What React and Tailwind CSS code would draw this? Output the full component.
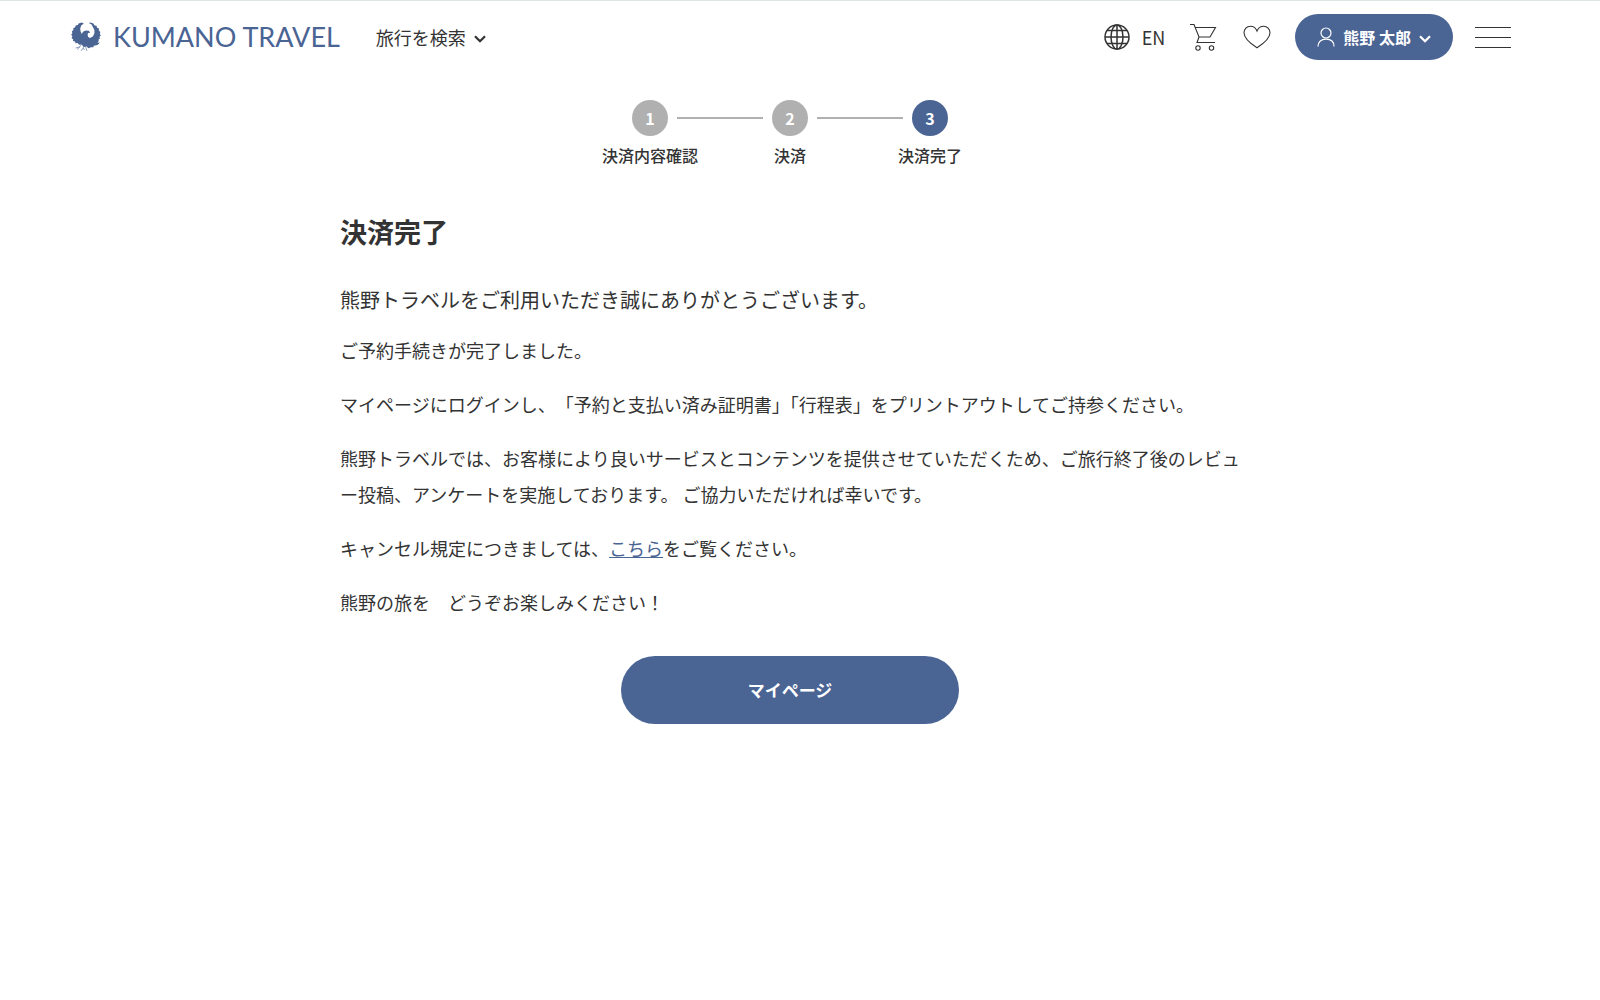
import { Fragment } from "react";

const steps = [
  { id: 1, label: "決済内容確認" },
  { id: 2, label: "決済" },
  { id: 3, label: "決済完了" },
];

const currentStep = 3;

function BirdLogo() {
  return (
    <svg width="30" height="30" viewBox="0 0 30 30" fill="currentColor" aria-hidden="true">
      <path d="M10.6 0.6 L7.6 1.6 L6.8 3 L4.6 3.4 L4.2 5.2 L2.2 6.2 L2.4 8 L0.8 9.4 L1.4 11 L0.2 12.8 L1.4 14.2 L0.6 16.2 L2.2 17.2 L2 19 L4 19.4 L4.6 21.2 L6.8 21 L8 22.8 L10.4 22.6 L13 25 L15.6 24.4 L17.4 26.2 L20 25.2 L22.4 25.2 L22.8 23.8 L26.4 23 L28 21.8 L28.4 20 L27.2 20.8 L26.4 20.4 L27.8 19 L27.4 17.8 L29 16.6 L28.4 15 L29.8 13.4 L28.8 11.8 L29.4 10 L27.8 8.6 L28 6.6 L26 5.8 L25.6 3.8 L23.6 3.4 L22.4 1.4 L19.6 0.4 L17.8 1 L20.6 2.6 L22 5.2 L23.4 8 L23.4 11.6 L21.8 14.6 L19 16 L17.2 15 L16.6 12.8 L17 11 L19.2 10.8 L17.8 8.8 L14.6 8.6 L12 9.8 L10.8 12 L9.6 9.6 L9.2 6.4 L10.2 3.6 L12.8 1.4 Z" />
      <path
        d="M10 23 L8.6 25 L4.6 26 M9 24.8 L6 27.6 M13 24 L11.4 27 L10 29 M14.6 25 L16 29 M12.4 26 L13.4 28"
        fill="none"
        stroke="currentColor"
        strokeWidth="0.6"
      />
    </svg>
  );
}

function ChevronIcon() {
  return (
    <svg
      className="mt-1"
      width="12"
      height="8"
      viewBox="0 0 12 8"
      fill="none"
      stroke="currentColor"
      strokeWidth="2.3"
      aria-hidden="true"
    >
      <path d="M1 1.2 L6 6.2 L11 1.2" />
    </svg>
  );
}

function GlobeIcon() {
  return (
    <svg width="26" height="26" viewBox="0 0 26 26" fill="none" stroke="currentColor" strokeWidth="1.5" aria-hidden="true">
      <circle cx="13" cy="13" r="12" />
      <ellipse cx="13" cy="13" rx="6" ry="12" />
      <path d="M13 1 V25 M1 13 H25 M3 6.5 H23 M3 19.5 H23" />
    </svg>
  );
}

function CartIcon() {
  return (
    <svg width="28" height="28" viewBox="0 0 28 28" fill="none" stroke="currentColor" strokeWidth="1.1" aria-hidden="true">
      <path d="M1 1.5 H5 L10 14 H21 L26.5 4.5 H6.2 M10 14 L8 19.5 H26" />
      <circle cx="9" cy="25" r="2.2" />
      <circle cx="22.5" cy="25" r="2.2" />
    </svg>
  );
}

function HeartIcon() {
  return (
    <svg width="28" height="24" viewBox="0 0 28 24" fill="none" stroke="currentColor" strokeWidth="1.1" aria-hidden="true">
      <path d="M14 22.8 C9 19.6 1 14.2 1 7.8 C1 4 3.8 1.2 7.4 1.2 C10.4 1.2 12.8 3 14 6 C15.2 3 17.6 1.2 20.6 1.2 C24.2 1.2 27 4 27 7.8 C27 14.2 19 19.6 14 22.8 Z" />
    </svg>
  );
}

function UserIcon() {
  return (
    <svg width="18" height="20" viewBox="0 0 18 20" fill="none" stroke="currentColor" strokeWidth="1.2" aria-hidden="true">
      <circle cx="9" cy="6" r="5" />
      <path d="M1 19.5 C1 14.6 4.4 12.2 9 12.2 C13.6 12.2 17 14.6 17 19.5" />
    </svg>
  );
}

function Header() {
  return (
    <header className="flex items-center justify-between pt-[13px] pr-[69px] pl-[71px]">
      <div className="flex items-center gap-9">
        <a href="#" className="flex items-center gap-3 text-[#4a6494]">
          <BirdLogo />
          <span className="font-['Lato'] text-[27px] leading-8 whitespace-nowrap">KUMANO TRAVEL</span>
        </a>
        <button className="flex items-center gap-2 text-lg leading-8 whitespace-nowrap">
          旅行を検索
          <ChevronIcon />
        </button>
      </div>

      <div className="flex items-center">
        <a href="#" className="flex items-center gap-3 text-lg leading-8">
          <GlobeIcon />
          EN
        </a>
        <a href="#" aria-label="カート" className="ml-6">
          <CartIcon />
        </a>
        <a href="#" aria-label="お気に入り" className="ml-[26px]">
          <HeartIcon />
        </a>
        <button className="ml-6 flex h-[46px] items-center gap-2 rounded-full bg-[#4a6494] px-[22px] text-base font-bold whitespace-nowrap text-white">
          <UserIcon />
          熊野 太郎
          <ChevronIcon />
        </button>
        <button aria-label="メニュー" className="ml-[22px] flex w-9 flex-col gap-[9px]">
          <span className="h-px w-full bg-[#333]" />
          <span className="h-px w-full bg-[#333]" />
          <span className="h-px w-full bg-[#333]" />
        </button>
      </div>
    </header>
  );
}

function Stepper() {
  return (
    <ol className="mt-10 flex justify-center gap-[9px]">
      {steps.map((step, i) => (
        <Fragment key={step.id}>
          {i > 0 && <li aria-hidden="true" className="mt-[17px] h-0.5 w-[86px] bg-[#b0b0b0]" />}
          <li className="flex w-9 flex-col items-center">
            <span
              className={`flex h-9 w-9 items-center justify-center rounded-full text-base font-bold text-white ${
                step.id === currentStep ? "bg-[#4a6494]" : "bg-[#b0b0b0]"
              }`}
            >
              {step.id}
            </span>
            <span className="mt-[7px] text-base leading-6 font-medium whitespace-nowrap">{step.label}</span>
          </li>
        </Fragment>
      ))}
    </ol>
  );
}

function App() {
  return (
    <div
      lang="ja"
      className="min-h-screen border-t border-[#dce6e2] bg-white pr-5 font-['Noto_Sans_CJK_JP',sans-serif] text-[#333]"
    >
      <Header />
      <Stepper />

      <main className="mx-auto max-w-[900px]">
        <h1 className="mt-[45px] text-[27px] leading-10 font-bold">決済完了</h1>
        <p className="mt-7 text-xl leading-10">熊野トラベルをご利用いただき誠にありがとうございます。</p>

        <div className="mt-3 space-y-[18px] text-lg leading-9">
          <p>ご予約手続きが完了しました。</p>
          <p>
            マイページにログインし、&#8203;「予約と支払い済み証明書」「行程表」をプリントアウトしてご持参ください。
          </p>
          <p>
            熊野トラベルでは、お客様により良いサービスとコンテンツを提供させていただくため、ご旅行終了後のレビュー投稿、アンケートを実施しております。
            ご協力いただければ幸いです。
          </p>
          <p>
            キャンセル規定につきましては、
            <a href="#" className="text-[#4a6494] underline">
              こちら
            </a>
            をご覧ください。
          </p>
          <p>熊野の旅を　どうぞお楽しみください！</p>
        </div>

        <button className="mx-auto mt-9 flex h-[68px] w-[338px] items-center justify-center rounded-full bg-[#4a6494] text-[17px] font-bold text-white">
          マイページ
        </button>
      </main>
    </div>
  );
}

export default App;
